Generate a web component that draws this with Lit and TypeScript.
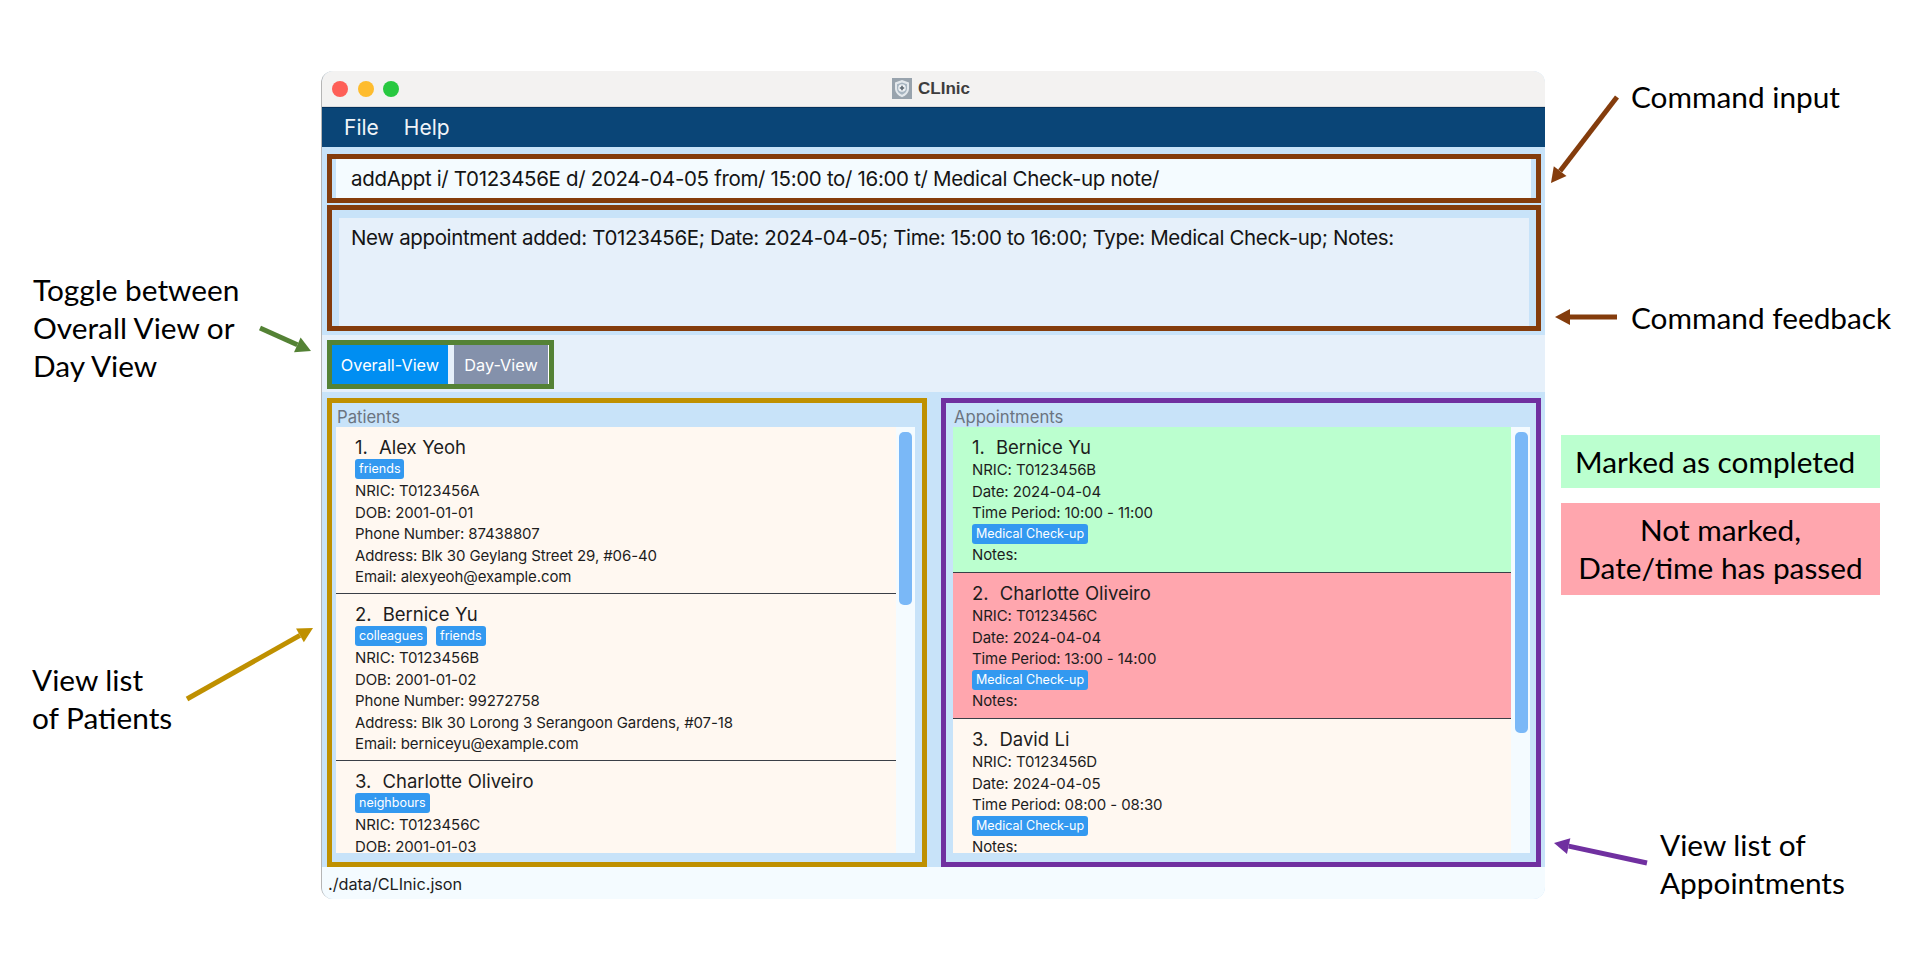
import { LitElement, html, css, svg } from 'lit';
import { customElement } from 'lit/decorators.js';

const PATIENTS = [
    {
        name: '1.  Alex Yeoh', tags: ['friends'],
        rows: ['NRIC: T0123456A', 'DOB: 2001-01-01', 'Phone Number: 87438807', 'Address: Blk 30 Geylang Street 29, #06-40', 'Email: alexyeoh@example.com'],
    },
    {
        name: '2.  Bernice Yu', tags: ['colleagues', 'friends'],
        rows: ['NRIC: T0123456B', 'DOB: 2001-01-02', 'Phone Number: 99272758', 'Address: Blk 30 Lorong 3 Serangoon Gardens, #07-18', 'Email: berniceyu@example.com'],
    },
    {
        name: '3.  Charlotte Oliveiro', tags: ['neighbours'],
        rows: ['NRIC: T0123456C', 'DOB: 2001-01-03'],
    },
];

const APPOINTMENTS = [
    { name: '1.  Bernice Yu', nric: 'T0123456B', date: '2024-04-04', time: '10:00 - 11:00', status: 'done' },
    { name: '2.  Charlotte Oliveiro', nric: 'T0123456C', date: '2024-04-04', time: '13:00 - 14:00', status: 'missed' },
    { name: '3.  David Li', nric: 'T0123456D', date: '2024-04-05', time: '08:00 - 08:30', status: '' },
];

// Annotation arrows: a stem with a triangular head at (x2, y2)
function arrow(x1: number, y1: number, x2: number, y2: number, color: string) {
    const len = Math.hypot(x2 - x1, y2 - y1);
    const ux = (x2 - x1) / len;
    const uy = (y2 - y1) / len;
    const bx = x2 - ux * 15;
    const by = y2 - uy * 15;
    const head = `${x2},${y2} ${bx - uy * 8},${by + ux * 8} ${bx + uy * 8},${by - ux * 8}`;
    return svg`
        <line x1=${x1} y1=${y1} x2=${bx} y2=${by} stroke=${color} stroke-width="5"></line>
        <polygon points=${head} fill=${color}></polygon>
    `;
}

@customElement('app-root')
export class AppRoot extends LitElement {
    static styles = css`
        :host {
            display: block;
            position: relative;
            height: 960px;
            overflow: hidden;
            background: #fff;
            font-family: Inter, "Liberation Sans", sans-serif;
        }

        .window {
            box-sizing: border-box;
            width: 1224px;
            height: 828px;
            margin-left: 321px;
            position: relative;
            top: 71px;
            border-left: 1px solid #b5b5b5;
            border-radius: 12px;
            overflow: hidden;
            background: #c8e3f9;
            display: flex;
            flex-direction: column;
        }

        .titlebar {
            height: 36px;
            flex: none;
            box-sizing: border-box;
            background: #f3f2f1;
            border-bottom: 1px solid #dcdcdc;
            position: relative;
            display: flex;
            align-items: center;
            justify-content: center;
            gap: 6px;
            padding-right: 5px;
        }
        .lights {
            position: absolute;
            left: 10px;
            top: 10px;
            display: flex;
            gap: 9.5px;
        }
        .light {
            width: 16px;
            height: 16px;
            border-radius: 50%;
        }
        .light.red { background: #fe5f57; }
        .light.yellow { background: #febc2e; }
        .light.green { background: #28c840; }
        .app-title {
            font-family: "Liberation Sans", sans-serif;
            font-weight: 700;
            font-size: 17px;
            color: #3d3d3d;
        }
        .shield {
            width: 20px;
            height: 21px;
            display: block;
        }

        .menubar {
            height: 40px;
            flex: none;
            box-sizing: border-box;
            background: #0a4577;
            border-top: 1px solid #04315d;
            color: #f0f4f8;
            font-size: 21px;
            display: flex;
            align-items: center;
            gap: 25px;
            padding-left: 22px;
        }

        .command {
            margin: 7px 4px 0 5px;
            height: 49px;
            flex: none;
            box-sizing: border-box;
            border: 5px solid #843c0c;
        }
        .command-input {
            height: 100%;
            box-sizing: border-box;
            background: #f4fbff;
            border-left: 4px solid #c8e3f9;
            border-right: 5px solid #c8e3f9;
            padding-left: 15px;
            display: flex;
            align-items: center;
            font-size: 20.5px;
            letter-spacing: -0.33px;
            color: #141414;
            white-space: pre;
        }

        .feedback {
            margin: 2px 4px 0 5px;
            height: 126px;
            flex: none;
            box-sizing: border-box;
            border: 5px solid #843c0c;
            padding: 8px 7px 0 7px;
        }
        .feedback-text {
            height: 100%;
            box-sizing: border-box;
            background: #e6f0fa;
            padding: 8px 0 0 12px;
            font-size: 20.5px;
            letter-spacing: -0.36px;
            line-height: 24px;
            color: #141414;
        }

        .toggle-row {
            margin-top: 4px;
            height: 57px;
            flex: none;
            box-sizing: border-box;
            background: #e6f0fa;
            padding: 5px 0 0 5px;
        }
        .toggle {
            display: inline-flex;
            height: 49px;
            width: 227px;
            box-sizing: border-box;
            border: 5px solid #548235;
            background: #fff;
        }
        .toggle-btn {
            display: flex;
            align-items: center;
            justify-content: center;
            color: #fff;
            font-size: 16.3px;
        }
        .toggle-btn.on {
            width: 116px;
            background: #008ef2;
        }
        .toggle-gap {
            width: 6px;
            background: #e6f0fa;
        }
        .toggle-btn.off {
            width: 94px;
            background: #8491ab;
        }

        .lists {
            margin: 6px 4px 0 5px;
            height: 469px;
            flex: none;
            display: grid;
            grid-template-columns: 600px 600px;
            column-gap: 14px;
        }
        .panel {
            box-sizing: border-box;
            height: 469px;
            display: flex;
            flex-direction: column;
            padding-bottom: 9px;
        }
        .panel.patients {
            border: 5px solid #bf9000;
            padding-left: 4px;
            padding-right: 7px;
        }
        .panel.appts {
            border: 5px solid #7030a0;
            padding-left: 7px;
            padding-right: 6px;
        }
        .panel-title {
            height: 24px;
            line-height: 28px;
            flex: none;
            font-size: 16.7px;
            letter-spacing: -0.03px;
            color: #6b7480;
            padding-left: 1px;
        }
        .list {
            flex: 1;
            min-height: 0;
            display: flex;
            overflow: hidden;
            background: #f4fbff;
        }
        .cards {
            flex: 1;
            min-width: 0;
        }
        .track {
            width: 19px;
            flex: none;
            box-sizing: border-box;
            padding: 5px 3px 0 3px;
        }
        .appts .track {
            padding-left: 4px;
            padding-right: 2px;
        }
        .thumb {
            background: #7ab8f7;
            border-radius: 5px;
        }

        .card {
            box-sizing: border-box;
            background: #fff8f1;
            padding: 8px 0 0 19px;
            border-bottom: 1px solid #3a3f47;
            color: #1d1d1d;
        }
        .patients .card { height: 167.2px; }
        .appts .card { height: 146px; }
        .card:last-child { border-bottom: none; }
        .card.done { background: #bbffcf; }
        .card.missed { background: #ffa6ae; }
        .name {
            font-size: 18.5px;
            line-height: 24px;
            letter-spacing: -0.05px;
            word-spacing: 0.5px;
            white-space: pre;
        }
        .row {
            font-size: 15px;
            letter-spacing: -0.1px;
            line-height: 21.5px;
            white-space: nowrap;
        }
        .tags {
            display: flex;
            gap: 9px;
            height: 21px;
        }
        .appts .tags { height: 20.5px; }
        .tag {
            height: 20px;
            box-sizing: border-box;
            padding: 0 4px;
            line-height: 20px;
            border-radius: 3px;
            background: #3399f0;
            color: #fff;
            font-size: 12.5px;
            white-space: nowrap;
        }

        .status {
            flex: 1;
            background: #f4fbff;
            padding-left: 6px;
            font-size: 16.3px;
            letter-spacing: -0.05px;
            line-height: 34px;
            color: #1d1d1d;
        }

        .arrows {
            position: absolute;
            left: 0;
            top: 0;
            width: 1920px;
            height: 960px;
            pointer-events: none;
        }
        .note {
            position: absolute;
            font-family: Lato, "Open Sans", sans-serif;
            font-size: 29.8px;
            line-height: 38px;
            color: #000;
            white-space: pre;
        }
        .note-input { left: 1631px; top: 78px; }
        .note-feedback { left: 1631px; top: 299px; }
        .note-toggle { left: 33px; top: 271px; }
        .note-patients { left: 32px; top: 661px; }
        .note-appts { left: 1660px; top: 826px; }
        .legend {
            position: absolute;
            left: 1561px;
            width: 319px;
            box-sizing: border-box;
            font-family: Lato, "Open Sans", sans-serif;
            font-size: 29.8px;
            line-height: 38px;
            color: #000;
        }
        .legend-done {
            top: 435px;
            height: 53px;
            background: #bbffcf;
            padding: 8px 0 0 14px;
        }
        .legend-missed {
            top: 503px;
            height: 92px;
            background: #ffa6ae;
            padding-top: 8px;
            text-align: center;
        }
    `;

    private _track(height: number) {
        return html`<div class="track"><div class="thumb" style="height:${height}px"></div></div>`;
    }

    private _patient(p: (typeof PATIENTS)[number]) {
        return html`
            <div class="card">
                <div class="name">${p.name}</div>
                <div class="tags">${p.tags.map((t) => html`<span class="tag">${t}</span>`)}</div>
                ${p.rows.map((r) => html`<div class="row">${r}</div>`)}
            </div>
        `;
    }

    private _appointment(a: (typeof APPOINTMENTS)[number]) {
        return html`
            <div class="card ${a.status}">
                <div class="name">${a.name}</div>
                <div class="row">NRIC: ${a.nric}</div>
                <div class="row">Date: ${a.date}</div>
                <div class="row">Time Period: ${a.time}</div>
                <div class="tags"><span class="tag">Medical Check-up</span></div>
                <div class="row">Notes:</div>
            </div>
        `;
    }

    render() {
        return html`
            <div class="window">
                <div class="titlebar">
                    <div class="lights">
                        <span class="light red"></span>
                        <span class="light yellow"></span>
                        <span class="light green"></span>
                    </div>
                    <svg class="shield" viewBox="0 0 20 21">
                        <rect width="20" height="21" fill="#98a3ad"></rect>
                        <path d="M10 2 L17 4.5 V10.5 C17 15 13.5 17.8 10 19.2 C6.5 17.8 3 15 3 10.5 V4.5 Z" fill="#e3e8ec"></path>
                        <path d="M10 4.5 L15 6.2 V10.6 C15 13.8 12.6 15.7 10 16.8 C7.4 15.7 5 13.8 5 10.6 V6.2 Z" fill="#a7b5c1"></path>
                        <circle cx="10" cy="10" r="3.8" fill="#eef1f4"></circle>
                        <path d="M9.2 7.8 H10.8 V9.2 H12.2 V10.8 H10.8 V12.2 H9.2 V10.8 H7.8 V9.2 H9.2 Z" fill="#5d6872"></path>
                    </svg>
                    <span class="app-title">CLInic</span>
                </div>
                <div class="menubar"><span>File</span><span>Help</span></div>
                <div class="command">
                    <div class="command-input">addAppt i/ T0123456E d/ 2024-04-05 from/ 15:00 to/ 16:00 t/ Medical Check-up note/</div>
                </div>
                <div class="feedback">
                    <div class="feedback-text">New appointment added: T0123456E; Date: 2024-04-05; Time: 15:00 to 16:00; Type: Medical Check-up; Notes:</div>
                </div>
                <div class="toggle-row">
                    <div class="toggle">
                        <div class="toggle-btn on">Overall-View</div>
                        <div class="toggle-gap"></div>
                        <div class="toggle-btn off">Day-View</div>
                    </div>
                </div>
                <div class="lists">
                    <div class="panel patients">
                        <div class="panel-title">Patients</div>
                        <div class="list">
                            <div class="cards">${PATIENTS.map((p) => this._patient(p))}</div>
                            ${this._track(173)}
                        </div>
                    </div>
                    <div class="panel appts">
                        <div class="panel-title">Appointments</div>
                        <div class="list">
                            <div class="cards">${APPOINTMENTS.map((a) => this._appointment(a))}</div>
                            ${this._track(301)}
                        </div>
                    </div>
                </div>
                <div class="status">./data/CLInic.json</div>
            </div>

            <svg class="arrows" viewBox="0 0 1920 960">
                ${arrow(1617, 97, 1551, 183, '#843c0c')}
                ${arrow(1617, 317, 1555, 317, '#843c0c')}
                ${arrow(260, 328, 311, 351, '#548235')}
                ${arrow(187, 699, 313, 628, '#bf9000')}
                ${arrow(1647, 863, 1554, 843, '#7030a0')}
            </svg>

            <div class="note note-input">Command input</div>
            <div class="note note-feedback">Command feedback</div>
            <div class="note note-toggle">Toggle between
Overall View or
Day View</div>
            <div class="note note-patients">View list
of Patients</div>
            <div class="note note-appts">View list of
Appointments</div>
            <div class="legend legend-done">Marked as completed</div>
            <div class="legend legend-missed">Not marked,<br />Date/time has passed</div>
        `;
    }
}
